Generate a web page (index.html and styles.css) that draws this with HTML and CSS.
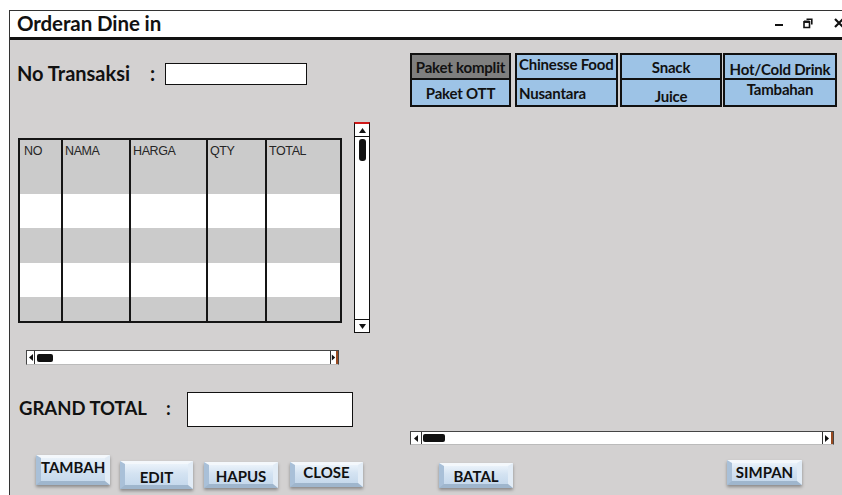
FILE: index.html
```html
<!DOCTYPE html>
<html lang="id">
<head>
<meta charset="utf-8">
<title>Orderan Dine in</title>
<link rel="stylesheet" href="styles.css">
</head>
<body>
<div class="window">
  <header class="titlebar">
    <span class="title">Orderan Dine in</span>
    <div class="controls">
      <svg class="ctl ctl-min" width="9" height="10" viewBox="0 0 9 10"><rect x="0" y="6" width="8" height="2" fill="#111"/></svg>
      <svg class="ctl ctl-max" width="10" height="11" viewBox="0 0 10 11"><path d="M3.5 1.2h5.3v5.3M1 3.7h5.5v5.8H1z" fill="none" stroke="#111" stroke-width="1.6"/><path d="M1 3.7h5.5" stroke="#111" stroke-width="2.4"/></svg>
      <svg class="ctl ctl-close" width="10" height="10" viewBox="0 0 10 10"><path d="M1 1l8 8M9 1L1 9" stroke="#111" stroke-width="2.2"/></svg>
    </div>
  </header>

  <main class="content">
    <section class="left">
      <div class="field trans-field">
        <span class="field-label">No Transaksi</span>
        <span class="field-colon">:</span>
        <span class="textbox trans-box"></span>
      </div>

      <div class="grid-wrap">
        <table class="items">
          <colgroup>
            <col class="c-no"><col class="c-nama"><col class="c-harga"><col class="c-qty"><col class="c-total">
          </colgroup>
          <tr class="head"><td>NO</td><td>NAMA</td><td>HARGA</td><td>QTY</td><td>TOTAL</td></tr>
          <tr class="r-white"><td></td><td></td><td></td><td></td><td></td></tr>
          <tr class="r-gray"><td></td><td></td><td></td><td></td><td></td></tr>
          <tr class="r-white"><td></td><td></td><td></td><td></td><td></td></tr>
          <tr class="r-gray r-last"><td></td><td></td><td></td><td></td><td></td></tr>
        </table>

        <div class="vscroll">
          <span class="vs-btn"><svg width="9" height="7" viewBox="0 0 9 7"><path d="M1 6L4.5 1 8 6z" fill="#111"/></svg></span>
          <span class="vs-thumb"></span>
          <span class="vs-track"></span>
          <span class="vs-btn vs-down"><svg width="9" height="7" viewBox="0 0 9 7"><path d="M1 1h7L4.5 6z" fill="#111"/></svg></span>
        </div>
      </div>

      <div class="hscroll hs-left">
        <span class="hs-btn"><svg width="6" height="9" viewBox="0 0 6 9"><path d="M5 1v7L1 4.5z" fill="#111"/></svg></span>
        <span class="hs-thumb"></span>
        <span class="hs-track"></span>
        <span class="hs-btn hs-end"><svg width="6" height="9" viewBox="0 0 6 9"><path d="M1 1v7l4-3.5z" fill="#111"/></svg></span>
      </div>

      <div class="field total-field">
        <span class="field-label total-label">GRAND TOTAL</span>
        <span class="field-colon total-colon">:</span>
        <span class="textbox total-box"></span>
      </div>

      <div class="actions">
        <button class="btn btn-tambah">TAMBAH</button>
        <button class="btn btn-edit">EDIT</button>
        <button class="btn btn-hapus">HAPUS</button>
        <button class="btn btn-close">CLOSE</button>
      </div>
    </section>

    <section class="right">
      <div class="menu">
        <div class="menu-col col-1">
          <span class="cat cat-active">Paket komplit</span>
          <span class="cat">Paket OTT</span>
        </div>
        <div class="menu-col col-2">
          <span class="cat cat-top cat-left">Chinesse Food</span>
          <span class="cat cat-left">Nusantara</span>
        </div>
        <div class="menu-col col-3">
          <span class="cat">Snack</span>
          <span class="cat cat-low">Juice</span>
        </div>
        <div class="menu-col col-4">
          <span class="cat cat-low">Hot/Cold Drink</span>
          <span class="cat cat-top">Tambahan</span>
        </div>
      </div>

      <div class="hscroll hs-right">
        <span class="hs-btn hs-btn-wide"><svg width="6" height="9" viewBox="0 0 6 9"><path d="M5 1v7L1 4.5z" fill="#111"/></svg></span>
        <span class="hs-thumb hs-thumb-wide"></span>
        <span class="hs-track"></span>
        <span class="hs-btn hs-btn-wide hs-end"><svg width="6" height="9" viewBox="0 0 6 9"><path d="M1 1v7l4-3.5z" fill="#111"/></svg></span>
      </div>

      <div class="actions actions-right">
        <button class="btn btn-batal">BATAL</button>
        <button class="btn btn-simpan">SIMPAN</button>
      </div>
    </section>
  </main>
</div>
</body>
</html>
```

FILE: styles.css
```css
* {
  box-sizing: border-box;
}

body {
  margin: 0;
  width: 842px;
  height: 495px;
  overflow: hidden;
  background: #fff;
  font-family: Lato, "Open Sans", sans-serif;
  color: #111;
}

.window {
  margin: 10px 0 0 9px;
  width: 845px;
  border-top: 1px solid #333;
  border-left: 1.5px solid #333;
}

/* title bar */
.titlebar {
  height: 29px;
  display: flex;
  align-items: center;
  padding: 0 0 2px 7px;
  background: #fff;
  border-bottom: 3px solid #111;
}

.title {
  font-size: 20.5px;
  font-weight: 700;
  letter-spacing: -0.1px;
}

.controls {
  margin-left: auto;
  display: flex;
  align-items: center;
  padding-right: 10px;
}

.ctl-min {
  margin-right: 19px;
}

.ctl-max {
  margin-right: 21px;
}

/* main area */
.content {
  display: flex;
  height: 455px;
  background: #d3d1d1;
}

.left {
  width: 391px;
  padding-left: 7px;
}

.right {
  flex: 1;
  padding-left: 9px;
}

/* labelled text boxes */
.field {
  display: flex;
  align-items: center;
  font-weight: 700;
  font-size: 20px;
}

.trans-field {
  margin-top: 23px;
  height: 22px;
}

.field-label {
  width: 133px;
  white-space: nowrap;
  padding-bottom: 3px;
}

.field-colon {
  width: 15px;
  padding-bottom: 3px;
}

.textbox {
  display: block;
  background: #fff;
  border: 1.5px solid #111;
}

.trans-box {
  width: 142px;
  height: 22px;
}

.total-field {
  margin-top: 27px;
  margin-left: 2px;
  height: 35px;
  font-size: 18.5px;
}

.total-label {
  width: 147px;
}

.total-colon {
  width: 21px;
}

.total-box {
  width: 166px;
  height: 35px;
}

/* order table with its vertical scrollbar */
.grid-wrap {
  display: flex;
  align-items: flex-start;
  margin-top: 37px;
}

.items {
  margin: 16px 0 0 1px;
  width: 322px;
  border-collapse: collapse;
  border: 2px solid #151515;
  border-left-color: #3a1f1f;
  table-layout: fixed;
  font-family: "Liberation Sans", Arial, sans-serif;
  font-size: 12.5px;
  color: #262626;
}

.c-no { width: 43px; }
.c-nama { width: 68px; }
.c-harga { width: 77px; }
.c-qty { width: 59px; }
.c-total { width: 75px; }

.items td {
  border-left: 2px solid #151515;
  border-right: 2px solid #151515;
  padding: 0;
}

.items .head td {
  height: 55px;
  vertical-align: top;
  padding: 4px 0 0 2px;
  letter-spacing: -0.4px;
}

.items .head td:first-child {
  padding-left: 4px;
}

.head { background: #cbcbcb; }
.r-white { background: #fff; height: 34px; }
.r-gray { background: #cbcbcb; height: 35px; }
.r-last { height: 25px; }

.vscroll {
  margin-left: 12px;
  width: 16px;
  height: 211px;
  display: flex;
  flex-direction: column;
  align-items: center;
  background: #fff;
  border: 1.5px solid #111;
  border-top: 2px solid #d01818;
}

.vs-btn {
  width: 100%;
  height: 13px;
  display: flex;
  align-items: center;
  justify-content: center;
  border-bottom: 1.5px solid #111;
}

.vs-down {
  border-bottom: none;
  border-top: 1.5px solid #111;
}

.vs-thumb {
  margin-top: 2px;
  width: 7px;
  height: 22px;
  background: #111;
  border-radius: 3px;
}

.vs-track {
  flex: 1;
}

/* horizontal scrollbars */
.hscroll {
  display: flex;
  align-items: center;
  height: 15px;
  background: #fff;
  border: 1.2px solid #444;
  border-bottom-color: #bbb;
}

.hs-left {
  margin: 17px 0 0 9px;
  width: 313px;
}

.hs-right {
  margin-top: 324px;
  width: 424px;
  height: 14px;
}

.hs-btn {
  width: 8px;
  height: 100%;
  display: flex;
  align-items: center;
  justify-content: center;
  border-right: 1.2px solid #333;
}

.hs-btn-wide {
  width: 11px;
}

.hs-end {
  border-right: 2.5px solid #9a4a20;
  border-left: 1.2px solid #333;
}

.hs-thumb {
  margin-left: 2px;
  width: 16px;
  height: 8px;
  background: #111;
  border-radius: 2px;
}

.hs-thumb-wide {
  margin-left: 1px;
  width: 22px;
}

.hs-track {
  flex: 1;
}

/* action buttons */
.actions {
  display: flex;
  align-items: flex-start;
  margin-top: 28px;
}

.actions-right {
  margin-top: 15px;
}

.btn {
  display: flex;
  align-items: center;
  justify-content: center;
  padding: 0;
  font-family: Lato, "Open Sans", sans-serif;
  font-weight: 700;
  font-size: 15px;
  color: #111;
  white-space: nowrap;
  background: linear-gradient(#eaf2fa 0%, #d4e3f2 45%, #c6d9ec 100%);
  border-style: solid;
  border-width: 3px 5px 4px 5px;
  border-color: #f4f8fc #e2ecf6 #9fb6cd #a9c0d8;
  box-shadow: 0 2px 3px rgba(0, 0, 0, 0.35);
}

.btn-tambah {
  margin-left: 19px;
  width: 74px;
  height: 30px;
  padding-bottom: 6px;
  justify-content: flex-start;
  padding-left: 0;
}

.btn-edit {
  margin: 6px 0 0 10px;
  width: 73px;
  height: 28px;
  padding-top: 4px;
}

.btn-hapus {
  margin: 7px 0 0 11px;
  width: 74px;
  height: 26px;
  padding-top: 3px;
}

.btn-close {
  margin: 7px 0 0 12px;
  width: 73px;
  height: 25px;
  padding-bottom: 4px;
}

.btn-batal {
  margin: 3px 0 0 29px;
  width: 74px;
  height: 25px;
  padding-top: 2px;
}

.btn-simpan {
  margin-left: 214px;
  width: 75px;
  height: 25px;
}

/* category menu */
.menu {
  display: flex;
  margin-top: 13px;
}

.menu-col {
  display: flex;
  flex-direction: column;
}

.col-1 { width: 101px; }
.col-2 { width: 103px; margin-left: 4px; }
.col-3 { width: 102px; margin-left: 2px; }
.col-4 { width: 114px; margin-left: 1px; }

.cat {
  height: 27px;
  display: flex;
  align-items: center;
  justify-content: center;
  background: #9dc3e6;
  border: 2px solid #111;
  font-size: 15px;
  font-weight: 700;
  white-space: nowrap;
  letter-spacing: -0.2px;
}

.cat + .cat {
  border-top: none;
}

.cat-active {
  background: #7f7f7f;
}

.cat-left {
  justify-content: flex-start;
  padding-left: 2px;
}

.cat-top {
  align-items: flex-start;
  padding-top: 0;
}

.cat-low {
  align-items: flex-end;
  padding-bottom: 0;
}
```
